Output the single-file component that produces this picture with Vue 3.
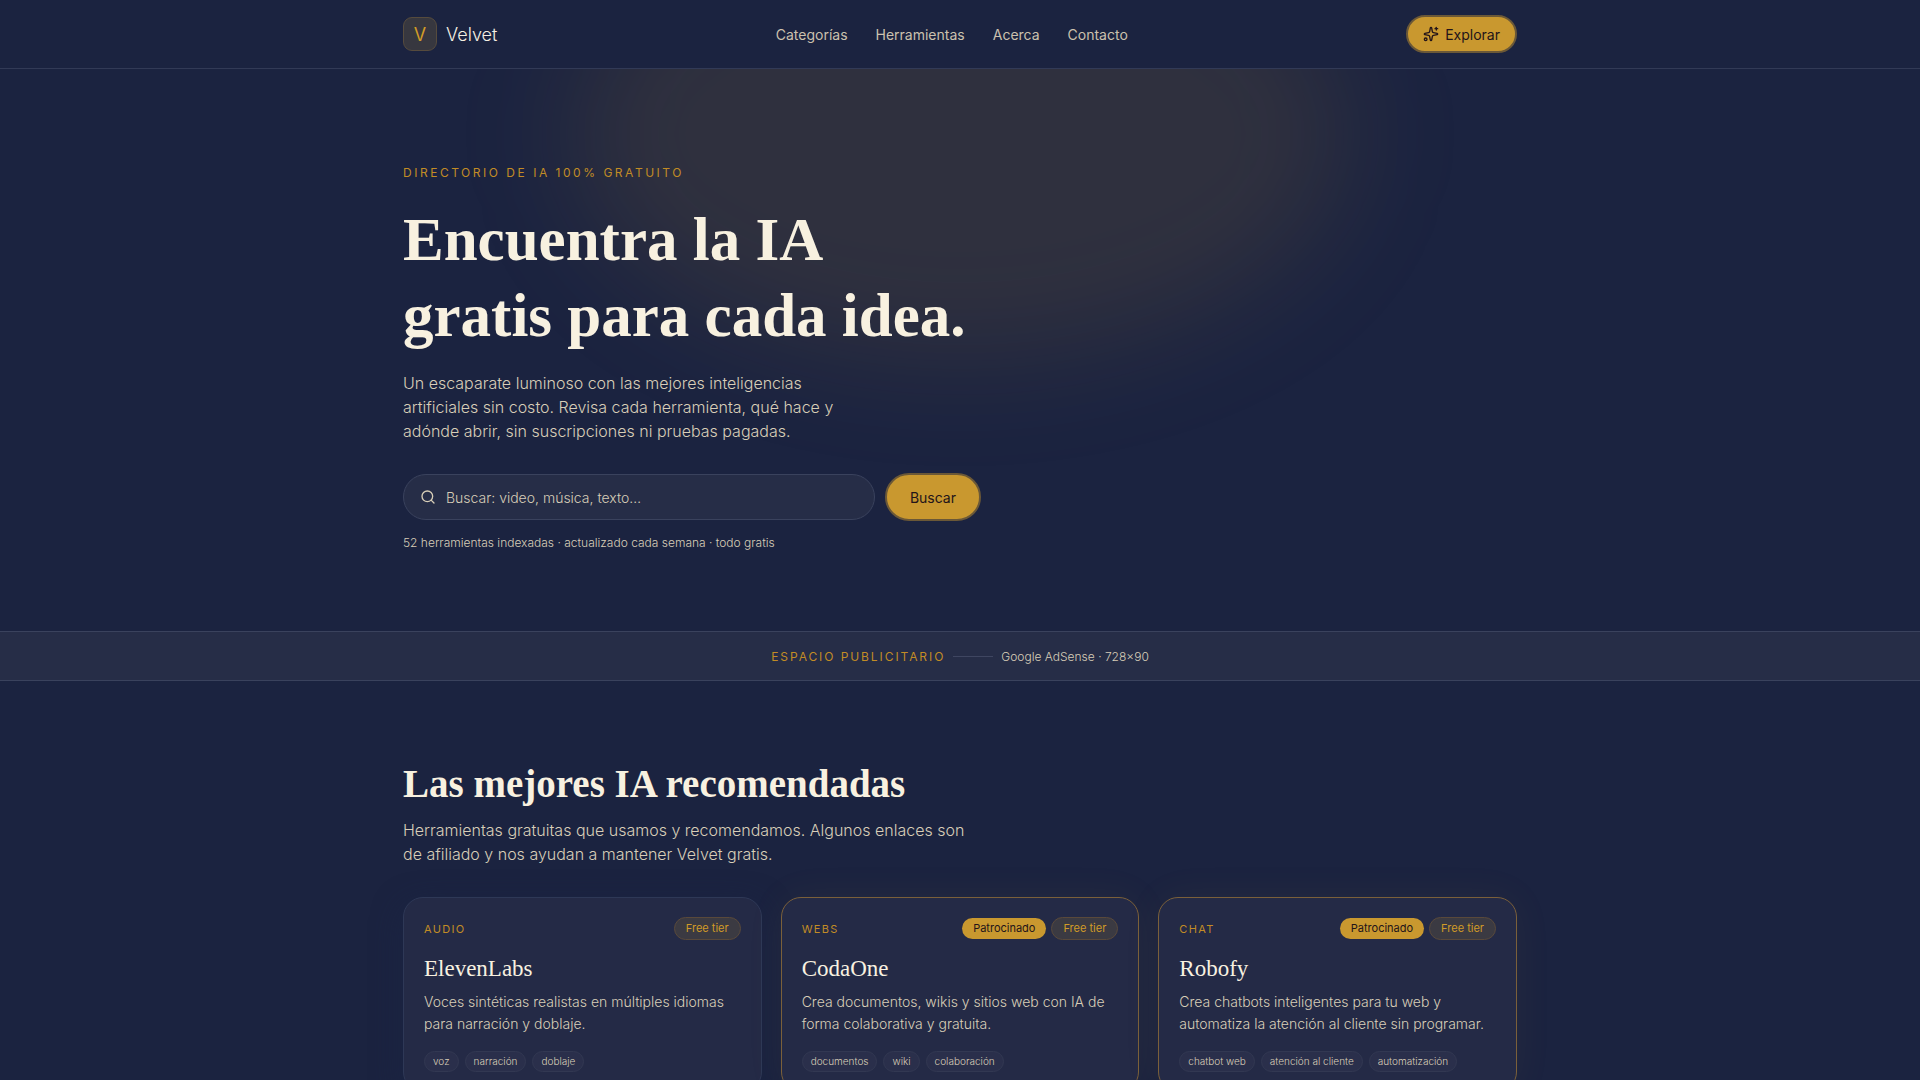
<template>
  <div class="page">
    <header class="topbar">
      <div class="container topbar-inner">
        <a href="#" class="brand">
          <span class="brand-mark">V</span>
          <span class="brand-name">Velvet</span>
        </a>

        <nav class="nav">
          <a v-for="link in links" :key="link" href="#">{{ link }}</a>
        </nav>

        <button type="button" class="btn btn-small">
          <svg class="icon" viewBox="0 0 24 24">
            <path d="M11.017 2.814a1 1 0 0 1 1.966 0l1.051 5.558a2 2 0 0 0 1.594 1.594l5.558 1.051a1 1 0 0 1 0 1.966l-5.558 1.051a2 2 0 0 0-1.594 1.594l-1.051 5.558a1 1 0 0 1-1.966 0l-1.051-5.558a2 2 0 0 0-1.594-1.594l-5.558-1.051a1 1 0 0 1 0-1.966l5.558-1.051a2 2 0 0 0 1.594-1.594z" />
            <path d="M20 2v4" />
            <path d="M22 4h-4" />
            <circle cx="4" cy="20" r="2" />
          </svg>
          <span>Explorar</span>
        </button>
      </div>
    </header>

    <main>
      <!-- Hero -->
      <section class="hero">
        <div class="glow"></div>
        <div class="container hero-inner">
          <p class="eyebrow">Directorio de IA 100% gratuito</p>
          <h1>Encuentra la IA<br />gratis para cada idea.</h1>
          <p class="lead">
            Un escaparate luminoso con las mejores inteligencias<br />
            artificiales sin costo. Revisa cada herramienta, qué hace y<br />
            adónde abrir, sin suscripciones ni pruebas pagadas.
          </p>

          <form class="search" @submit.prevent>
            <div class="search-field">
              <label for="search" aria-label="Buscar">
                <svg class="icon" viewBox="0 0 24 24">
                  <circle cx="11" cy="11" r="8" />
                  <path d="m21 21-4.3-4.3" />
                </svg>
              </label>
              <input id="search" v-model="query" type="text" placeholder="Buscar: video, música, texto…" />
            </div>
            <button type="submit" class="btn">Buscar</button>
          </form>

          <p class="note">52 herramientas indexadas · actualizado cada semana · todo gratis</p>
        </div>
      </section>

      <!-- Ad slot -->
      <aside class="ad">
        <span class="ad-label">Espacio publicitario</span>
        <span class="ad-line"></span>
        <span class="ad-size">Google AdSense · 728×90</span>
      </aside>

      <!-- Recommended tools -->
      <section class="container featured">
        <h2>Las mejores IA recomendadas</h2>
        <p class="featured-text">
          Herramientas gratuitas que usamos y recomendamos. Algunos enlaces son<br />
          de afiliado y nos ayudan a mantener Velvet gratis.
        </p>

        <div class="grid">
          <article v-for="tool in tools" :key="tool.name" class="card" :class="{ sponsored: tool.sponsored }">
            <div class="card-top">
              <span class="category">{{ tool.category }}</span>
              <div class="badges">
                <span v-if="tool.sponsored" class="badge badge-solid">Patrocinado</span>
                <span class="badge badge-tier">Free tier</span>
              </div>
            </div>
            <h3>{{ tool.name }}</h3>
            <p class="description">{{ tool.lines[0] }}<br />{{ tool.lines[1] }}</p>
            <ul class="tags">
              <li v-for="tag in tool.tags" :key="tag">{{ tag }}</li>
            </ul>
          </article>
        </div>
      </section>
    </main>
  </div>
</template>

<script setup>
import { ref } from 'vue'

const query = ref('')

const links = ['Categorías', 'Herramientas', 'Acerca', 'Contacto']

const tools = [
  {
    name: 'ElevenLabs',
    category: 'Audio',
    sponsored: false,
    lines: ['Voces sintéticas realistas en múltiples idiomas', 'para narración y doblaje.'],
    tags: ['voz', 'narración', 'doblaje']
  },
  {
    name: 'CodaOne',
    category: 'Webs',
    sponsored: true,
    lines: ['Crea documentos, wikis y sitios web con IA de', 'forma colaborativa y gratuita.'],
    tags: ['documentos', 'wiki', 'colaboración']
  },
  {
    name: 'Robofy',
    category: 'Chat',
    sponsored: true,
    lines: ['Crea chatbots inteligentes para tu web y', 'automatiza la atención al cliente sin programar.'],
    tags: ['chatbot web', 'atención al cliente', 'automatización']
  }
]
</script>

<style>
body {
  margin: 0;
  background: #1b2340;
}
</style>

<style scoped>
.page {
  min-height: 100vh;
  background: #1b2340;
  color: #d8ceb8;
  font-family: Inter, "Liberation Sans", sans-serif;
  font-size: 14px;
  font-weight: 300;
}

.page * {
  box-sizing: border-box;
}

.container {
  width: 100%;
  max-width: 1154px;
  margin: 0 auto;
  padding: 0 20px;
}

h1,
h2,
h3,
p {
  margin: 0;
}

h1,
h2,
h3 {
  font-family: "Liberation Serif", serif;
  color: #f8f1e0;
}

a {
  color: inherit;
  text-decoration: none;
}

.icon {
  display: block;
  width: 16px;
  height: 16px;
  fill: none;
  stroke: currentColor;
  stroke-width: 2;
  stroke-linecap: round;
  stroke-linejoin: round;
}

/* Header */
.topbar {
  position: relative;
  background: #1b2340;
  border-bottom: 1px solid #323a56;
}

.topbar-inner {
  display: flex;
  align-items: center;
  justify-content: space-between;
  height: 68px;
}

.brand {
  display: flex;
  align-items: center;
  gap: 9px;
}

.brand-mark {
  display: grid;
  place-items: center;
  width: 34px;
  height: 34px;
  border: 1px solid #564b3d;
  border-radius: 9px;
  background: #37373f;
  color: #d19b27;
  font-size: 18px;
  font-weight: 400;
}

.brand-name {
  color: #f5efe2;
  font-size: 18px;
}

.nav {
  display: flex;
  gap: 28px;
  color: #cbc1ae;
  font-weight: 400;
}

.btn {
  display: flex;
  align-items: center;
  justify-content: center;
  height: 48px;
  padding: 0 23px;
  border: 2px solid #6b5837;
  border-radius: 24px;
  background: #c9982f;
  color: #23141a;
  font-family: inherit;
  font-size: 14px;
  font-weight: 400;
  cursor: pointer;
}

.btn-small {
  gap: 6px;
  height: 38px;
  padding: 0 15px;
}

/* Hero */
.hero {
  position: relative;
  overflow: hidden;
}

.glow {
  position: absolute;
  top: -160px;
  left: 50%;
  width: 780px;
  height: 450px;
  margin-left: -390px;
  border-radius: 50%;
  background: rgba(201, 150, 47, 0.12);
  filter: blur(56px);
}

.hero-inner {
  position: relative;
  padding-top: 94px;
  padding-bottom: 78px;
}

.eyebrow {
  color: #c28c25;
  font-size: 12px;
  font-weight: 400;
  line-height: 20px;
  letter-spacing: 0.21em;
  text-transform: uppercase;
}

h1 {
  margin-top: 19px;
  font-size: 61px;
  font-weight: 700;
  line-height: 76px;
}

.lead {
  margin-top: 17px;
  font-size: 16px;
  line-height: 24px;
}

.search {
  display: flex;
  align-items: center;
  gap: 10px;
  width: 578px;
  max-width: 100%;
  margin-top: 30px;
}

.search-field {
  display: flex;
  flex: 1;
  align-items: center;
  gap: 10px;
  height: 46px;
  padding: 0 16px;
  border: 1px solid #3a425d;
  border-radius: 24px;
  background: #262d47;
}

.search-field input {
  flex: 1;
  min-width: 0;
  padding: 0;
  border: 0;
  outline: 0;
  background: none;
  color: #f8f1e0;
  font-family: inherit;
  font-size: 14px;
  font-weight: 300;
}

.search-field input::placeholder {
  color: #d8ceb8;
  opacity: 1;
}

.note {
  margin-top: 12px;
  font-size: 12px;
  line-height: 20px;
}

/* Ad slot */
.ad {
  display: flex;
  align-items: center;
  justify-content: center;
  gap: 8px;
  height: 50px;
  border-top: 1px solid #3a425d;
  border-bottom: 1px solid #3a425d;
  background: #262d47;
  font-size: 12px;
}

.ad-label {
  color: #c28c25;
  font-weight: 400;
  letter-spacing: 0.16em;
  text-transform: uppercase;
}

.ad-line {
  width: 40px;
  height: 1px;
  background: #3f4661;
}

/* Recommended tools */
.featured {
  padding-top: 80px;
  padding-bottom: 80px;
}

h2 {
  font-size: 39px;
  font-weight: 700;
  line-height: 45px;
}

.featured-text {
  margin-top: 12px;
  font-size: 16px;
  line-height: 24px;
}

.grid {
  display: grid;
  grid-template-columns: repeat(3, 1fr);
  gap: 19px;
  margin-top: 31px;
}

.card {
  padding: 19px 20px;
  border: 1px solid #2e3856;
  border-radius: 20px;
  background: #242a46;
  box-shadow: 0 8px 30px rgba(27, 36, 68, 0.6);
}

.card.sponsored {
  border-color: #7b603a;
  box-shadow: 0 0 40px rgba(201, 150, 47, 0.06);
}

.card-top {
  display: flex;
  align-items: center;
  justify-content: space-between;
}

.category {
  color: #c28c25;
  font-size: 11px;
  font-weight: 400;
  letter-spacing: 0.12em;
  text-transform: uppercase;
}

.badges {
  display: flex;
  align-items: center;
  gap: 5px;
}

.badge {
  padding: 0 11px;
  border-radius: 12px;
  font-size: 11px;
  font-weight: 400;
  line-height: 21px;
}

.badge-solid {
  background: #c9982f;
  color: #23141a;
}

.badge-tier {
  border: 1px solid #59493b;
  background: #3b3a42;
  color: #d19b27;
}

h3 {
  margin-top: 16px;
  font-size: 23px;
  font-weight: 400;
  line-height: 26px;
}

.description {
  margin-top: 9px;
  line-height: 22px;
}

.tags {
  display: flex;
  gap: 6px;
  margin: 16px 0 0;
  padding: 0;
  list-style: none;
}

.tags li {
  padding: 0 8px;
  border: 1px solid #323852;
  border-radius: 11px;
  background: #2a2f4b;
  font-size: 10px;
  line-height: 19px;
}
</style>
